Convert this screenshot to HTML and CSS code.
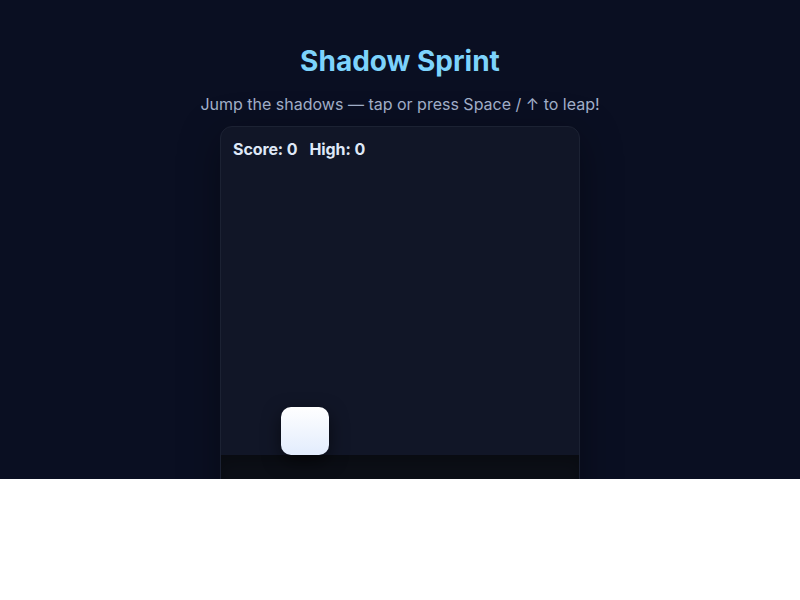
FILE: index.html
```html
<!DOCTYPE html>
<html lang="en">
  <head>
    <meta charset="utf-8">
    <title>Shadow Sprint</title>
    <link rel="stylesheet" href="styles.css">
  </head>
  <body>
    <div class="page">
      <h1 class="title">Shadow Sprint</h1>
      <p class="hint">Jump the shadows — tap or press Space / ↑ to leap!</p>

      <div class="game">
        <div class="game__hud">
          <span>Score: 0</span>
          <span>High: 0</span>
        </div>
        <div class="game__stage">
          <div class="runner"></div>
        </div>
        <div class="game__ground"></div>
      </div>
    </div>
  </body>
</html>
```

FILE: styles.css
```css
* { box-sizing: border-box; }

html, body {
  margin: 0;
  background: #fff;
  font-family: Inter, "Noto Sans", sans-serif;
}

.page {
  height: 479px;
  overflow: hidden;
  padding-top: 44px;
  background: #0a0f22;
  display: flex;
  flex-direction: column;
  align-items: center;
}

.title {
  margin: 0;
  font-size: 28px;
  line-height: 34px;
  font-weight: 700;
  color: #7dd3fc;
}

.hint {
  margin: 14px 0 10px;
  font-size: 16px;
  line-height: 24px;
  color: #a3b1cb;
}

.game {
  width: 360px;
  flex: none;
  border: 1px solid #1c2233;
  border-radius: 12px;
  background: #111627;
  box-shadow: 0 10px 40px rgba(0, 0, 0, 0.35);
  overflow: hidden;
  position: relative;
}

.game__hud {
  display: flex;
  gap: 12px;
  padding: 12px 12px 0;
  font-size: 16px;
  line-height: 20px;
  font-weight: 700;
  letter-spacing: -0.1px;
  color: #dfe8f7;
}

.game__stage {
  height: 296px;
  position: relative;
}

/* the player block sits on the ground line */
.runner {
  position: absolute;
  left: 60px;
  bottom: 0;
  width: 48px;
  height: 48px;
  border-radius: 10px;
  background: linear-gradient(#ffffff, #e2ecfd);
  box-shadow: 0 6px 18px rgba(0, 0, 0, 0.55);
}

.game__ground {
  height: 80px;
  background: #0c0f17;
  box-shadow: inset 0 8px 16px rgba(0, 0, 0, 0.25);
}
```
